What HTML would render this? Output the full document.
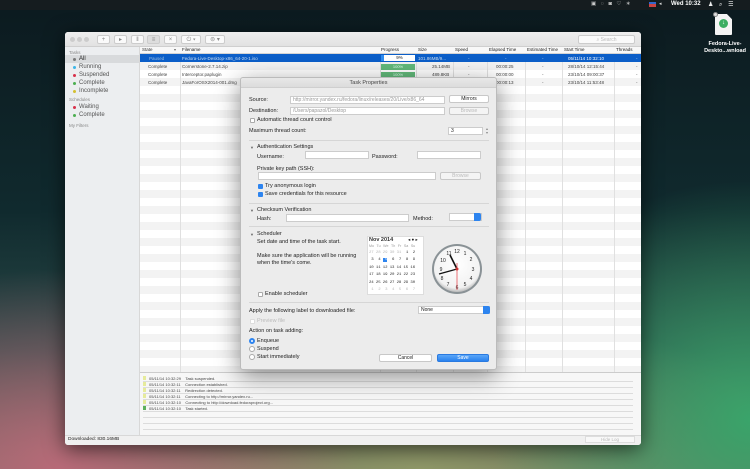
<!DOCTYPE html>
<html><head><meta charset="utf-8"><style>
*{margin:0;padding:0;box-sizing:border-box}
body{width:750px;height:469px;overflow:hidden;position:relative;font-family:"Liberation Sans",sans-serif;color:#222;
background:
radial-gradient(ellipse 300px 200px at 60px 469px,#b86a78 0%,rgba(184,106,120,0) 100%),
radial-gradient(ellipse 260px 240px at 750px 420px,#3aa46a 0%,rgba(58,164,106,0) 100%),
radial-gradient(ellipse 400px 160px at 420px 469px,#8f9868 0%,rgba(143,152,104,0) 100%),
linear-gradient(180deg,#0c1a1f 0%,#102a2e 45%,#2a4a48 75%,#6a6a60 100%);}
.a{position:absolute;white-space:nowrap}
.f5{font-size:5px}.f6{font-size:5.5px}
.menubar{position:absolute;left:0;top:0;width:750px;height:10px;background:#151c1f}
.win{position:absolute;left:65px;top:32px;width:576px;height:413px;background:#f4f4f4;box-shadow:0 4px 20px rgba(0,0,0,.6);border-radius:3px;overflow:hidden}
.tb{position:absolute;left:0;top:0;width:576px;height:15px;background:linear-gradient(#eeeeee,#e2e2e2);border-bottom:1px solid #cfcfcf}
.btn{position:absolute;top:3px;height:9px;border:1px solid #ccc;border-radius:2px;background:#fafafa;font-size:6px;color:#888;text-align:center;line-height:8px}
.side{position:absolute;left:0;top:15px;width:75px;height:388px;background:#eceef0;border-right:1px solid #d8d8d8}
.dot{position:absolute;width:3px;height:3px;border-radius:50%}
.tbl{position:absolute;left:75px;top:15px;width:501px;height:325px;background:repeating-linear-gradient(#fff 0 8px,#f3f3f3 8px 16px);background-position:0 7px}
.hdr{position:absolute;left:0;top:0;width:501px;height:7px;background:#f8f8f8;border-bottom:1px solid #d4d4d4}
.vl{position:absolute;top:0;width:1px;height:325px;background:#e0e0e0}
.dlg{position:absolute;left:240px;top:77px;width:257px;height:293px;background:#ececec;border-radius:3px;box-shadow:0 6px 24px rgba(0,0,0,.45);border:1px solid #bbb}
.fld{position:absolute;background:#fff;border:1px solid #ccc;height:8px;font-size:5px;color:#999;line-height:7px;padding-left:2px;overflow:hidden}
.pb{position:absolute;background:#fff;border:1px solid #c8c8c8;border-radius:2px;height:8px;font-size:5px;text-align:center;line-height:7px}
.cb{position:absolute;width:5px;height:5px;border:1px solid #aaa;background:#fff;border-radius:1px}
.cbon{background:#2d84ef;border-color:#2d84ef}
.sep{position:absolute;left:8px;width:240px;height:1px;background:#d6d6d6}
.rd{position:absolute;width:6px;height:6px;border-radius:50%;border:1px solid #aaa;background:#fff}
.log{position:absolute;left:75px;top:340px;width:501px;height:63px;background:#f7f7f7;border-top:1px solid #ccc}
.lr{position:absolute;left:3px;width:490px;height:5.8px;border-bottom:1px solid #dcdcdc;font-size:4px;line-height:5px;color:#444}
.sq{display:inline-block;width:3px;height:4px;background:#e6eb9c;margin-right:3px;vertical-align:top}
.side .f6{font-size:6px}
</style></head><body>
<div class="menubar"></div>
<div class="a" style="left:591px;top:1px;color:#ccc;font-size:5.5px;word-spacing:3px">▣ ◌ ◙ ♡ ∗</div>
<div class="a" style="left:649px;top:2px;width:7px;height:5px;background:#c44;border-top:2px solid #36c"></div>
<div class="a" style="left:659px;top:1px;color:#ddd;font-size:5px">◂</div>
<div class="a" style="left:671px;top:1px;color:#fff;font-size:6px;font-weight:bold">Wed 10:32</div>
<div class="a" style="left:708px;top:1px;color:#eee;font-size:6px;word-spacing:4px">♟ ⌕ ☰</div>
<!-- desktop icon -->
<div class="a" style="left:715px;top:14px;width:17px;height:21px;background:#f4f4f4;border-radius:1px;clip-path:polygon(0 0,70% 0,100% 25%,100% 100%,0 100%)"></div>
<div class="a" style="left:719px;top:19px;width:9px;height:9px;border-radius:50%;background:#3cae62;color:#fff;font-size:6px;text-align:center;line-height:9px">↓</div>
<div class="a" style="left:713px;top:12px;width:5px;height:5px;border-radius:50%;background:#ddd;border:1px solid #888"></div>
<div class="a" style="left:704px;top:41px;color:#fff;font-size:5.5px;font-weight:bold;text-align:center;width:42px;line-height:7px;white-space:normal">Fedora-Live-<br>Deskto...wnload</div>

<div class="win">
 <div class="tb">
  <div class="dot" style="left:5px;top:5px;width:5px;height:5px;background:#ccc"></div>
  <div class="dot" style="left:12px;top:5px;width:5px;height:5px;background:#ccc"></div>
  <div class="dot" style="left:19px;top:5px;width:5px;height:5px;background:#ccc"></div>
  <div class="btn" style="left:32px;width:13px">+</div>
  <div class="btn" style="left:49px;width:13px">▸</div>
  <div class="btn" style="left:66px;width:13px">‖</div>
  <div class="btn" style="left:82px;width:13px;background:#ddd">≡</div>
  <div class="btn" style="left:99px;width:13px">×</div>
  <div class="btn" style="left:116px;width:20px">⏻ ▾</div>
  <div class="btn" style="left:140px;width:20px">⊜ ▾</div>
  <div class="btn" style="left:513px;width:57px;font-size:5px;color:#bbb">⌕ Search</div>
 </div>
 <div class="side">
  <div class="a f5" style="left:4px;top:3px;color:#888;font-size:4.5px">Tasks</div>
  <div class="a" style="left:0;top:8px;width:74px;height:8px;background:#d8dadc"></div>
  <div class="dot" style="left:8px;top:11px;background:#777"></div><div class="a f6" style="left:14px;top:8.5px">All</div>
  <div class="dot" style="left:8px;top:19px;background:#3bb6e8"></div><div class="a f6" style="left:14px;top:16.5px;color:#555">Running</div>
  <div class="dot" style="left:8px;top:27px;background:#d8304a"></div><div class="a f6" style="left:14px;top:24.5px;color:#555">Suspended</div>
  <div class="dot" style="left:8px;top:35px;background:#4caf50"></div><div class="a f6" style="left:14px;top:32.5px;color:#555">Complete</div>
  <div class="dot" style="left:8px;top:43px;background:#d4c030"></div><div class="a f6" style="left:14px;top:40.5px;color:#555">Incomplete</div>
  <div class="a" style="left:4px;top:50px;color:#888;font-size:4.5px">Schedules</div>
  <div class="dot" style="left:8px;top:59px;background:#d8304a"></div><div class="a f6" style="left:14px;top:56.5px;color:#555">Waiting</div>
  <div class="dot" style="left:8px;top:67px;background:#4caf50"></div><div class="a f6" style="left:14px;top:64.5px;color:#555">Complete</div>
  <div class="a" style="left:4px;top:76px;color:#888;font-size:4.5px">My Filters</div>
 </div>
 <div class="tbl">
  <div class="vl" style="left:40px"></div><div class="vl" style="left:240px"></div><div class="vl" style="left:276px"></div><div class="vl" style="left:313px"></div><div class="vl" style="left:347px"></div><div class="vl" style="left:385px"></div><div class="vl" style="left:422px"></div><div class="vl" style="left:474px"></div>
  <div class="hdr"></div>
  <div class="a" style="top:0;left:2px;font-size:4.5px;color:#333">State</div>
  <div class="a" style="top:0;left:34px;font-size:4px;color:#666">▾</div>
  <div class="a" style="top:0;left:42px;font-size:4.5px">Filename</div>
  <div class="a" style="top:0;left:241px;font-size:4.5px">Progress</div>
  <div class="a" style="top:0;left:278px;font-size:4.5px">Size</div>
  <div class="a" style="top:0;left:315px;font-size:4.5px">Speed</div>
  <div class="a" style="top:0;left:349px;font-size:4.5px">Elapsed Time</div>
  <div class="a" style="top:0;left:387px;font-size:4.5px">Estimated Time</div>
  <div class="a" style="top:0;left:424px;font-size:4.5px">Start Time</div>
  <div class="a" style="top:0;left:476px;font-size:4.5px">Threads</div>
  <div class="a" style="top:7px;left:0;width:501px;height:8px;background:#0b5ec8"></div>
  <div class="a" style="top:8px;left:241px;width:34px;height:6px;background:#fff;border-left:3px solid #2e8cf0;font-size:4.5px;text-align:center;line-height:6px">9%</div>
  <div class="a" style="top:17px;left:241px;width:34px;height:6px;background:#62b97a;color:#dfe;font-size:4px;text-align:center;line-height:6px">100%</div>
  <div class="a" style="top:25px;left:241px;width:34px;height:6px;background:#62b97a;color:#dfe;font-size:4px;text-align:center;line-height:6px">100%</div>
  <div class="a" style="top:8.5px;left:0;width:501px;font-size:4.5px;color:#cde">
   <span class="a" style="left:9px;color:#9bd">Paused</span><span class="a" style="left:42px">Fedora-Live-Desktop-x86_64-20-1.iso</span><span class="a" style="left:278px">101.86MB/9...</span><span class="a" style="left:328px">-</span><span class="a" style="left:365px">-</span><span class="a" style="left:402px">-</span><span class="a" style="left:428px;color:#fff">05/11/14 10:32:10</span><span class="a" style="left:496px">-</span>
  </div>
  <div class="a" style="top:16.5px;left:0;width:501px;font-size:4.5px;color:#444">
   <span class="a" style="left:8px">Complete</span><span class="a" style="left:42px">Cornerstone-2.7.14.zip</span><span class="a" style="left:292px">25.14MB</span><span class="a" style="left:328px">-</span><span class="a" style="left:356px">00:00:25</span><span class="a" style="left:402px">-</span><span class="a" style="left:428px">28/10/14 12:15:44</span><span class="a" style="left:496px">-</span>
  </div>
  <div class="a" style="top:24.5px;left:0;width:501px;font-size:4.5px;color:#444">
   <span class="a" style="left:8px">Complete</span><span class="a" style="left:42px">Interceptor.paplugin</span><span class="a" style="left:292px">489.8KB</span><span class="a" style="left:328px">-</span><span class="a" style="left:356px">00:00:00</span><span class="a" style="left:402px">-</span><span class="a" style="left:428px">23/10/14 09:00:37</span><span class="a" style="left:496px">-</span>
  </div>
  <div class="a" style="top:32.5px;left:0;width:501px;font-size:4.5px;color:#444">
   <span class="a" style="left:8px">Complete</span><span class="a" style="left:42px">JavaForOSX2014-001.dmg</span><span class="a" style="left:356px">00:00:13</span><span class="a" style="left:402px">-</span><span class="a" style="left:428px">23/10/14 11:53:48</span><span class="a" style="left:496px">-</span>
  </div>
 </div>
 <div class="log">
  <div class="lr" style="top:3px"><span class="sq"></span>05/11/14 10:32:29 &nbsp;&nbsp; Task suspended.</div>
  <div class="lr" style="top:9px"><span class="sq"></span>05/11/14 10:32:11 &nbsp;&nbsp; Connection established.</div>
  <div class="lr" style="top:15px"><span class="sq"></span>05/11/14 10:32:11 &nbsp;&nbsp; Redirection detected.</div>
  <div class="lr" style="top:21px"><span class="sq"></span>05/11/14 10:32:11 &nbsp;&nbsp; Connecting to http://mirror.yandex.ru...</div>
  <div class="lr" style="top:27px"><span class="sq"></span>05/11/14 10:32:10 &nbsp;&nbsp; Connecting to http://download.fedoraproject.org...</div>
  <div class="lr" style="top:33px"><span class="sq" style="background:#5cb05c"></span>05/11/14 10:32:10 &nbsp;&nbsp; Task started.</div>
  <div class="lr" style="top:39px"></div><div class="lr" style="top:45px"></div><div class="lr" style="top:51px"></div><div class="lr" style="top:57px"></div>
 </div>
 <div class="a" style="left:0;top:403px;width:576px;height:10px;background:#f0f0f0;border-top:1px solid #d8d8d8"></div>
 <div class="a" style="left:3px;top:405px;font-size:4.8px">Downloaded: 830.16MB</div>
 <div class="a" style="left:520px;top:404px;width:50px;height:7px;border:1px solid #ddd;background:#f8f8f8;font-size:4.5px;color:#bbb;text-align:center;line-height:6px">Hide Log</div>
</div>

<div class="dlg">
 <div class="a" style="left:0;top:0;width:255px;height:10px;background:linear-gradient(#e8e8e8,#dcdcdc);border-bottom:1px solid #cfcfcf;border-radius:3px 3px 0 0"></div>
 <div class="a" style="left:0;top:2px;width:255px;text-align:center;font-size:5.5px;color:#444">Task Properties</div>
 <div class="a f6" style="left:8px;top:19px">Source:</div>
 <div class="fld" style="left:49px;top:18px;width:155px">http://mirror.yandex.ru/fedora/linux/releases/20/Live/x86_64</div>
 <div class="pb" style="left:208px;top:17px;width:40px">Mirrors</div>
 <div class="a f6" style="left:8px;top:30px">Destination:</div>
 <div class="fld" style="left:49px;top:29px;width:155px">/Users/papazol/Desktop</div>
 <div class="pb" style="left:208px;top:29px;width:40px;color:#bbb;background:#f4f4f4">Browse</div>
 <div class="cb" style="left:9px;top:40px"></div><div class="a f6" style="left:16px;top:39px">Automatic thread count control</div>
 <div class="a f6" style="left:8px;top:50px">Maximum thread count:</div>
 <div class="fld" style="left:207px;top:49px;width:35px;color:#222">3</div>
 <div class="a" style="left:245px;top:49px;font-size:4px;color:#888;line-height:4px">▴<br>▾</div>
 <div class="sep" style="top:62px"></div>
 <div class="a" style="left:9px;top:67px;font-size:4px;color:#666">▼</div><div class="a f6" style="left:16px;top:66px">Authentication Settings</div>
 <div class="a f6" style="left:16px;top:76px">Username:</div><div class="fld" style="left:64px;top:73px;width:64px"></div>
 <div class="a f6" style="left:131px;top:76px">Password:</div><div class="fld" style="left:176px;top:73px;width:64px"></div>
 <div class="a f6" style="left:16px;top:88px">Private key path (SSH):</div>
 <div class="fld" style="left:17px;top:94px;width:178px"></div>
 <div class="pb" style="left:199px;top:94px;width:41px;color:#bbb;background:#f4f4f4">Browse</div>
 <div class="cb cbon" style="left:17px;top:106px"></div><div class="a f6" style="left:24px;top:105px">Try anonymous login</div>
 <div class="cb cbon" style="left:17px;top:114px"></div><div class="a f6" style="left:24px;top:113px">Save credentials for this resource</div>
 <div class="sep" style="top:125px"></div>
 <div class="a" style="left:9px;top:130px;font-size:4px;color:#666">▼</div><div class="a f6" style="left:16px;top:129px">Checksum Verification</div>
 <div class="a f6" style="left:16px;top:138px">Hash:</div><div class="fld" style="left:45px;top:136px;width:123px"></div>
 <div class="a f6" style="left:172px;top:138px">Method:</div>
 <div class="fld" style="left:208px;top:135px;width:33px"></div>
 <div class="a" style="left:233px;top:135px;width:7px;height:8px;background:#2d84ef;border-radius:0 2px 2px 0"></div>
 <div class="sep" style="top:148px"></div>
 <div class="a" style="left:9px;top:154px;font-size:4px;color:#666">▼</div><div class="a f6" style="left:16px;top:153px">Scheduler</div>
 <div class="a f6" style="left:16px;top:161px">Set date and time of the task start.</div>
 <div class="a f6" style="left:16px;top:175px">Make sure the application will be running</div>
 <div class="a f6" style="left:16px;top:182px">when the time's come.</div>
 <div class="a" style="left:126px;top:158px;width:57px;height:59px;background:#fff;border:1px solid #ddd"></div>
 <div class="a" style="left:128px;top:159px;font-size:5.5px;font-weight:bold;color:#333">Nov 2014</div>
 <div class="a" style="left:167px;top:159px;font-size:4.5px">◂ ● ▸</div>
 <div class="a" style="left:128px;top:166px;width:54px;font-size:3.6px;color:#999;word-spacing:1.6px">Mo Tu We Th Fr Sa Su</div>
 <div class="a" style="left:128px;top:172px;width:54px;font-size:4px;line-height:7.4px;color:#333;white-space:pre;font-family:'Liberation Mono',monospace;letter-spacing:-0.1px"><span style="color:#bbb">27 28 29 30 31</span>  1  2
 3  4 <span style="background:#2d84ef;color:#fff"> 5</span>  6  7  8  9
10 11 12 13 14 15 16
17 18 19 20 21 22 23
24 25 26 27 28 29 30
<span style="color:#bbb"> 1  2  3  4  5  6  7</span></div>
 <svg class="a" style="left:190px;top:165px" width="52" height="52" viewBox="0 0 52 52">
  <defs><radialGradient id="g" cx=".5" cy=".4" r=".6"><stop offset="0" stop-color="#fff"/><stop offset=".85" stop-color="#f2f2f2"/><stop offset="1" stop-color="#bbb"/></radialGradient></defs>
  <circle cx="26" cy="26" r="25" fill="#8a9296"/><circle cx="26" cy="26" r="23" fill="url(#g)"/>
  <g font-size="5" font-family="Liberation Sans" text-anchor="middle" fill="#222">
   <text x="26" y="10">12</text><text x="34" y="12">1</text><text x="40" y="18">2</text><text x="42" y="28">3</text><text x="40" y="37">4</text><text x="34" y="43">5</text><text x="26" y="46">6</text><text x="17" y="43">7</text><text x="11" y="37">8</text><text x="10" y="28">9</text><text x="12" y="19">10</text><text x="18" y="12">11</text></g>
  <line x1="26" y1="26" x2="19" y2="12" stroke="#111" stroke-width="1.6"/>
  <line x1="26" y1="26" x2="8" y2="31" stroke="#111" stroke-width="1.2"/>
  <line x1="26" y1="20" x2="26" y2="47" stroke="#e8646a" stroke-width=".9"/>
  <circle cx="26" cy="26" r="1.5" fill="#c33"/>
 </svg>
 <div class="cb" style="left:17px;top:214px"></div><div class="a f6" style="left:24px;top:213px">Enable scheduler</div>
 <div class="sep" style="top:224px"></div>
 <div class="a f6" style="left:8px;top:230px">Apply the following label to downloaded file:</div>
 <div class="fld" style="left:177px;top:228px;width:72px;color:#222">None</div>
 <div class="a" style="left:242px;top:228px;width:7px;height:8px;background:#2d84ef;border-radius:0 2px 2px 0"></div>
 <div class="cb" style="left:9px;top:241px;border-color:#ddd"></div><div class="a f6" style="left:16px;top:240px;color:#bbb">Preview file</div>
 <div class="a f6" style="left:8px;top:250px">Action on task adding:</div>
 <div class="rd" style="left:8px;top:260px;border:2px solid #2d84ef"></div><div class="a f6" style="left:16px;top:260px">Enqueue</div>
 <div class="rd" style="left:8px;top:268px"></div><div class="a f6" style="left:16px;top:268px">Suspend</div>
 <div class="rd" style="left:8px;top:276px"></div><div class="a f6" style="left:16px;top:276px">Start immediately</div>
 <div class="pb" style="left:138px;top:276px;width:53px">Cancel</div>
 <div class="pb" style="left:196px;top:276px;width:52px;background:linear-gradient(#5aa6f8,#2a82ee);border-color:#2a7ae0;color:#fff">Save</div>
</div>
</body></html>
